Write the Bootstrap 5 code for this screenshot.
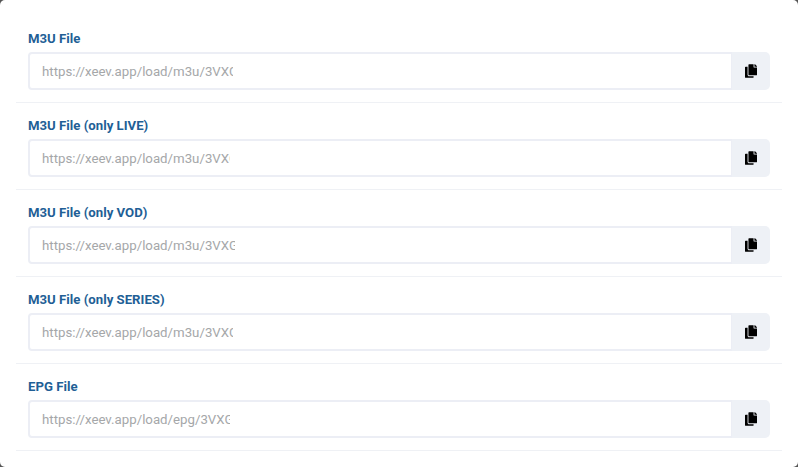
<!DOCTYPE html>
<html lang="en">
<head>
  <meta charset="UTF-8" />
  <title>Playlist links</title>
  <link href="https://cdn.jsdelivr.net/npm/bootstrap@5.3.0/dist/css/bootstrap.min.css" rel="stylesheet" />
  <style>
    html, body { height: 467px; overflow: hidden; background: #555; }
    .sheet { height: 467px; background: #fff; border-radius: 5px; padding: 16px 16px 0; font-family: Roboto, sans-serif; }
    .link-row { padding: 14px 12px 12px; height: 87px; border-bottom: 1px solid #eff1f5; }
    .link-label { display: block; font-size: 13.2px; font-weight: 700; line-height: 18px; color: #1f5f96; margin-bottom: 4px; }
    .link-input.form-control { height: 38px; font-size: 13.25px; color: #a5a7a9; padding: 0 12px; border: 2px solid #eceef5; border-radius: 4px 0 0 4px; font-family: Roboto, sans-serif; background: #fff; box-shadow: none; }
    .clip-232 { padding-right: 498px !important; }
    .clip-229 { padding-right: 501px !important; }
    .clip-234 { padding-right: 496px !important; }
    .copy-btn { width: 38px; height: 38px; background: #eef1f6; border: 0; border-radius: 0 5px 5px 0; color: #000; padding: 0; }
    .copy-btn svg { width: 12px; height: 14px; display: block; margin: 0 auto; }
  </style>
</head>
<body>
  <div class="sheet">
    <div class="link-row">
      <label class="link-label">M3U File</label>
      <div class="input-group">
        <input class="form-control link-input clip-232" readonly value="https://xeev.app/load/m3u/3VXG8kQ2mT" />
        <button class="btn copy-btn" type="button"><svg viewBox="0 0 448 512"><path fill="currentColor" d="M320 448v40c0 13-11 24-24 24H24c-13 0-24-11-24-24V120c0-13 11-24 24-24h72v296c0 31 25 56 56 56h168zm0-344V0H152c-13 0-24 11-24 24v368c0 13 11 24 24 24h272c13 0 24-11 24-24V128H344c-13 0-24-11-24-24zm121-31L375 7a24 24 0 0 0-17-7h-6v96h96v-6c0-6-3-12-7-17z"/></svg></button>
      </div>
    </div>
    <div class="link-row">
      <label class="link-label">M3U File (only LIVE)</label>
      <div class="input-group">
        <input class="form-control link-input clip-229" readonly value="https://xeev.app/load/m3u/3VXG8kQ2mT" />
        <button class="btn copy-btn" type="button"><svg viewBox="0 0 448 512"><path fill="currentColor" d="M320 448v40c0 13-11 24-24 24H24c-13 0-24-11-24-24V120c0-13 11-24 24-24h72v296c0 31 25 56 56 56h168zm0-344V0H152c-13 0-24 11-24 24v368c0 13 11 24 24 24h272c13 0 24-11 24-24V128H344c-13 0-24-11-24-24zm121-31L375 7a24 24 0 0 0-17-7h-6v96h96v-6c0-6-3-12-7-17z"/></svg></button>
      </div>
    </div>
    <div class="link-row">
      <label class="link-label">M3U File (only VOD)</label>
      <div class="input-group">
        <input class="form-control link-input clip-234" readonly value="https://xeev.app/load/m3u/3VXG8kQ2mT" />
        <button class="btn copy-btn" type="button"><svg viewBox="0 0 448 512"><path fill="currentColor" d="M320 448v40c0 13-11 24-24 24H24c-13 0-24-11-24-24V120c0-13 11-24 24-24h72v296c0 31 25 56 56 56h168zm0-344V0H152c-13 0-24 11-24 24v368c0 13 11 24 24 24h272c13 0 24-11 24-24V128H344c-13 0-24-11-24-24zm121-31L375 7a24 24 0 0 0-17-7h-6v96h96v-6c0-6-3-12-7-17z"/></svg></button>
      </div>
    </div>
    <div class="link-row">
      <label class="link-label">M3U File (only SERIES)</label>
      <div class="input-group">
        <input class="form-control link-input clip-232" readonly value="https://xeev.app/load/m3u/3VXG8kQ2mT" />
        <button class="btn copy-btn" type="button"><svg viewBox="0 0 448 512"><path fill="currentColor" d="M320 448v40c0 13-11 24-24 24H24c-13 0-24-11-24-24V120c0-13 11-24 24-24h72v296c0 31 25 56 56 56h168zm0-344V0H152c-13 0-24 11-24 24v368c0 13 11 24 24 24h272c13 0 24-11 24-24V128H344c-13 0-24-11-24-24zm121-31L375 7a24 24 0 0 0-17-7h-6v96h96v-6c0-6-3-12-7-17z"/></svg></button>
      </div>
    </div>
    <div class="link-row">
      <label class="link-label">EPG File</label>
      <div class="input-group">
        <input class="form-control link-input clip-229" readonly value="https://xeev.app/load/epg/3VXG8kQ2mT" />
        <button class="btn copy-btn" type="button"><svg viewBox="0 0 448 512"><path fill="currentColor" d="M320 448v40c0 13-11 24-24 24H24c-13 0-24-11-24-24V120c0-13 11-24 24-24h72v296c0 31 25 56 56 56h168zm0-344V0H152c-13 0-24 11-24 24v368c0 13 11 24 24 24h272c13 0 24-11 24-24V128H344c-13 0-24-11-24-24zm121-31L375 7a24 24 0 0 0-17-7h-6v96h96v-6c0-6-3-12-7-17z"/></svg></button>
      </div>
    </div>
  </div>
  <script src="https://cdn.jsdelivr.net/npm/bootstrap@5.3.0/dist/js/bootstrap.bundle.min.js"></script>
</body>
</html>
